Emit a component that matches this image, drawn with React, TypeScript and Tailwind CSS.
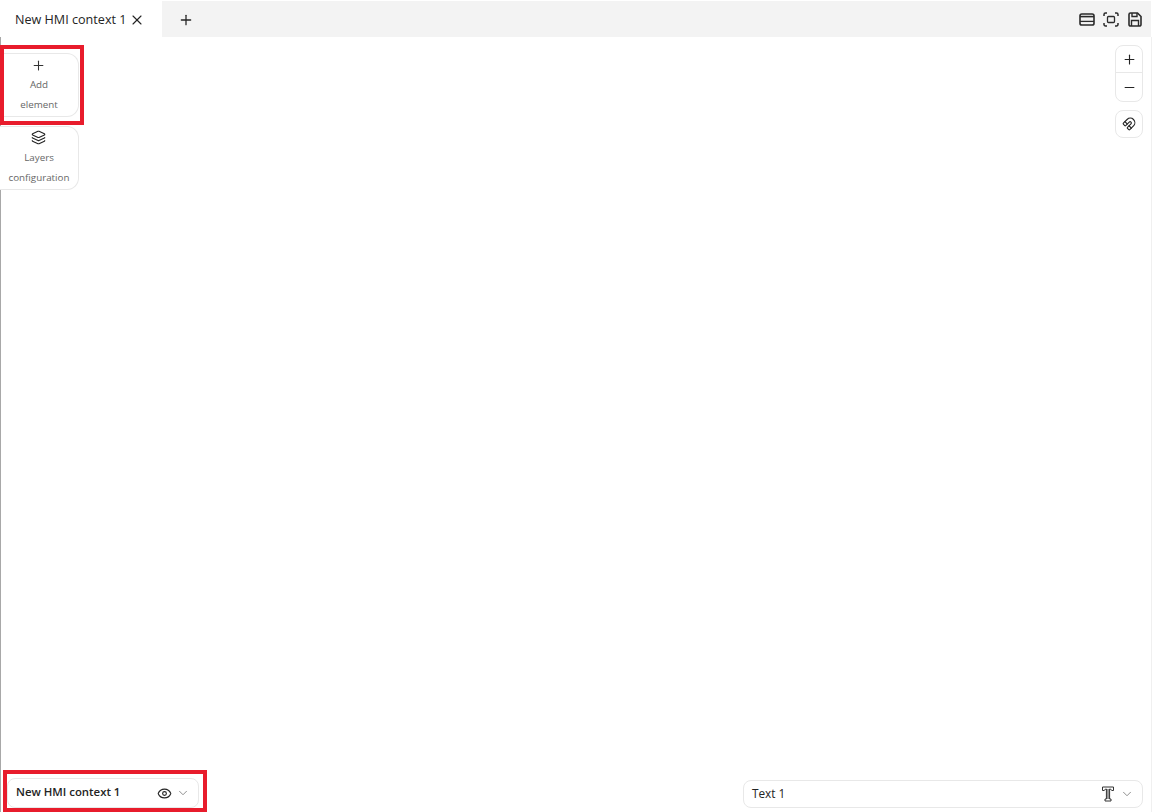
import React from 'react';
import { Plus, Minus, X, Layers, Eye, ChevronDown, Magnet } from 'lucide-react';

const font = { fontFamily: '"Open Sans", "Liberation Sans", sans-serif' };

const SideButton = ({ icon, top, bottom }: { icon: React.ReactNode; top: string; bottom: string }) => (
    <button className="flex h-[64px] w-[79px] flex-col items-center rounded-r-xl border border-l-0 border-[#e8e8e8] bg-white pt-[4px] text-[9.8px] leading-[20px] font-medium text-[#666666]">
        {icon}
        <span className="mt-[2px]">{top}</span>
        <span>{bottom}</span>
    </button>
);

const PanelIcon = () => (
    <svg width="16" height="13" viewBox="0 0 16 13" fill="none" stroke="#2b2b2b">
        <rect x="1" y="1" width="14" height="11" rx="1.8" strokeWidth="1.6" />
        <path d="M1 3.6h14" strokeWidth="1.6" />
        <path d="M1 8.4h14" strokeWidth="1.3" />
    </svg>
);

const FrameIcon = () => (
    <svg width="16" height="15" viewBox="0 0 16 15" fill="none" stroke="#2b2b2b" strokeWidth="1.5">
        <path d="M1 4V2.5A1.5 1.5 0 0 1 2.5 1H4M12 1h1.5A1.5 1.5 0 0 1 15 2.5V4M15 11v1.5a1.5 1.5 0 0 1-1.5 1.5H12M4 14H2.5A1.5 1.5 0 0 1 1 12.500V11" />
        <rect x="4.500" y="4.500" width="7" height="6" rx="1" strokeWidth="1.3" />
    </svg>
);

const FloppyIcon = () => (
    <svg width="14" height="15" viewBox="0 0 14 15" fill="none" stroke="#2b2b2b" strokeWidth="1.6">
        <path d="M1 2.500A1.500 1.500 0 0 1 2.500 1h7L13 4.500v8a1.500 1.500 0 0 1-1.500 1.500h-9A1.500 1.500 0 0 1 1 12.500z" />
        <path d="M4 1v3.500h5V1M3.500 14V8.500h7V14" strokeWidth="1.4" />
    </svg>
);

const TextIcon = () => (
    <svg width="14" height="16" viewBox="0 0 14 16" fill="none">
        <path d="M5.500 3h3v10h-3z" fill="#999" />
        <path d="M1.500 1h11v3.500h-1.800L9.500 3H8.600v10H10v2H4v-2h1.400V3h-.9L3.300 4.500H1.500z" stroke="#333" strokeWidth="1" />
    </svg>
);

export default function App() {
    return (
        <div style={font} className="relative flex h-[812px] w-[1156px] flex-col overflow-hidden bg-white text-[#242424]">
            {/* Tab bar */}
            <div className="mt-[1px] flex h-[36px] w-[1151px] shrink-0 items-center bg-[#f3f3f3]">
                <div className="flex h-full w-[162px] items-center bg-white pt-[2px] pl-[15px]">
                    <span className="text-[12.6px]">New HMI context 1</span>
                    <X size={16} strokeWidth={1.7} className="ml-[3px]" />
                </div>
                <Plus size={16} strokeWidth={1.9} className="ml-[16px] translate-y-[1px]" />
                <div className="ml-auto flex items-center gap-[8px] pt-[1px] pr-[9px]">
                    <PanelIcon />
                    <FrameIcon />
                    <span className="ml-[1px]"><FloppyIcon /></span>
                </div>
            </div>

            {/* Canvas */}
            <div className="relative w-[1152px] flex-1 border-r border-l border-r-[#f0f0f0] border-l-[#a8a8a8]">
                <div className="absolute top-[16px] -left-[1px] flex flex-col gap-[9px]">
                    <SideButton icon={<Plus size={15} strokeWidth={1.7} className="-translate-x-[1px] text-[#333]" />} top="Add" bottom="element" />
                    <SideButton icon={<Layers size={15} strokeWidth={1.8} className="-translate-x-[1px] -translate-y-[1px] text-[#222]" />} top="Layers" bottom="configuration" />
                </div>

                <div className="absolute top-[8px] right-[8px] flex flex-col items-center gap-[8px]">
                    <div className="flex w-[28px] flex-col rounded-lg border border-[#e8e8e8] bg-white">
                        <div className="flex h-[27px] items-center justify-center border-b border-[#e8e8e8]">
                            <Plus size={15} strokeWidth={1.8} />
                        </div>
                        <div className="flex h-[28px] items-center justify-center">
                            <Minus size={15} strokeWidth={1.8} />
                        </div>
                    </div>
                    <div className="flex h-[28px] w-[28px] items-center justify-center rounded-lg border border-[#e8e8e8] bg-white">
                        <Magnet size={14} strokeWidth={1.9} />
                    </div>
                </div>

                <div className="absolute bottom-[4px] left-[6px] flex h-[30px] w-[192px] items-center rounded-lg border border-[#e8e8e8] bg-white pr-[8px] pl-[8px]">
                    <span className="-translate-y-[1px] text-[11.4px] font-semibold">New HMI context 1</span>
                    <Eye size={15} strokeWidth={1.8} className="ml-auto" />
                    <ChevronDown size={14} strokeWidth={1.4} className="ml-[4px] text-[#777]" />
                </div>

                <div className="absolute right-[8px] bottom-[4px] flex h-[28px] w-[400px] items-center rounded-lg border border-[#e8e8e8] bg-white pr-[8px] pl-[8px]">
                    <span className="text-[11.8px] font-medium">Text 1</span>
                    <span className="ml-auto"><TextIcon /></span>
                    <ChevronDown size={14} strokeWidth={1.4} className="ml-[5px] text-[#777]" />
                </div>
            </div>

            {/* Red annotation frames */}
            <div className="pointer-events-none absolute top-[45px] left-0 h-[80px] w-[84px] border-[4px] border-[#e81c2c]" />
            <div className="pointer-events-none absolute top-[770px] left-[3px] h-[42px] w-[204px] border-[4px] border-[#e81c2c]" />
        </div>
    );
}
